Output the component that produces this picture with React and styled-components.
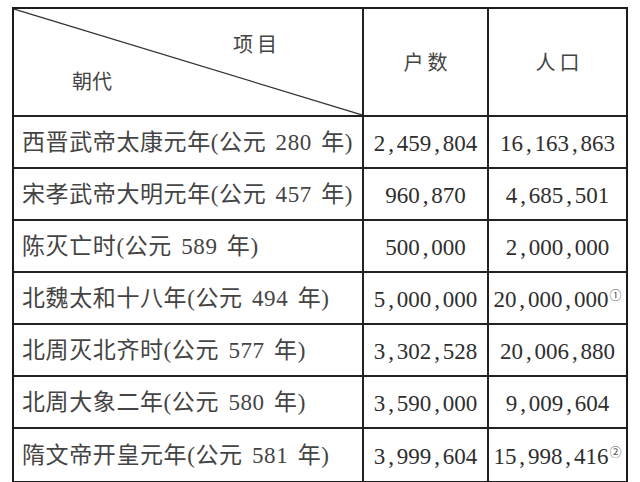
import React from 'react'
import styled, { createGlobalStyle } from 'styled-components'

const GlobalStyle = createGlobalStyle`
  html, body {
    margin: 0;
    padding: 0;
    background: #fff;
  }
  body {
    font-family: "Liberation Serif", "Noto Sans CJK SC", serif;
    color: #2a2a2a;
  }
`

const Page = styled.div`
  width: 640px;
  height: 482px;
  box-sizing: border-box;
  padding: 7px 0 0 12px;
  overflow: hidden;
`

const Table = styled.div`
  display: grid;
  grid-template-columns: 350px 125px 137px;
  grid-template-rows: 108px repeat(6, 52px) 52px;
  width: 616px;
  box-sizing: border-box;
  border: 2px solid #1c1c1c;
`

const Cell = styled.div`
  box-sizing: border-box;
  border-right: ${(p) => (p.$lastCol ? 'none' : '2px solid #222')};
  border-bottom: ${(p) => (p.$lastRow ? 'none' : '2px solid #222')};
  display: flex;
  align-items: center;
  justify-content: ${(p) => (p.$center ? 'center' : 'flex-start')};
  padding-left: ${(p) => (p.$center ? '0' : '8px')};
  font-size: 23px;
  line-height: 1;
  white-space: nowrap;
`

const Name = styled.span`
  font-family: "Liberation Serif", "Noto Sans CJK SC", serif;
  color: #444;
  letter-spacing: 0.6px;
  word-spacing: 3px;
`

const Num = styled.span`
  font-family: "Liberation Serif", serif;
  font-size: 23px;
  color: #2e2e2e;
  position: relative;
  top: 1px;
`

const Comma = styled.span`
  display: inline-block;
  width: 11.5px;
  text-align: center;
`

const Note = styled.sup`
  font-family: "Noto Sans CJK SC", sans-serif;
  font-size: 12px;
  color: #555;
  line-height: 1;
  vertical-align: top;
  position: relative;
  top: -3px;
  margin-left: 1px;
`

const CornerCell = styled(Cell)`
  position: relative;
  flex-direction: column;
  align-items: stretch;
  justify-content: space-between;
  padding: 24px 0 23px 0;
`

const Diagonal = styled.svg`
  position: absolute;
  left: 0;
  top: 0;
  width: 100%;
  height: 100%;
  pointer-events: none;
`

const HeadLabel = styled.span`
  font-family: "Noto Sans CJK SC", sans-serif;
  font-size: 20px;
  color: #444;
  line-height: 22px;
  letter-spacing: ${(p) => p.$spacing || '0'};
  align-self: ${(p) => (p.$right ? 'flex-end' : 'flex-start')};
  margin: ${(p) => (p.$right ? '0 81px 0 0' : '0 0 0 58px')};
`

const HeadTitle = styled.span`
  font-family: "Noto Sans CJK SC", sans-serif;
  font-size: 20px;
  color: #444;
  letter-spacing: 4px;
  margin-right: -4px;
`

const rows = [
  ['西晋武帝太康元年(公元 280 年)', '2,459,804', '16,163,863'],
  ['宋孝武帝大明元年(公元 457 年)', '960,870', '4,685,501'],
  ['陈灭亡时(公元 589 年)', '500,000', '2,000,000'],
  ['北魏太和十八年(公元 494 年)', '5,000,000', '20,000,000', '①'],
  ['北周灭北齐时(公元 577 年)', '3,302,528', '20,006,880'],
  ['北周大象二年(公元 580 年)', '3,590,000', '9,009,604'],
  ['隋文帝开皇元年(公元 581 年)', '3,999,604', '15,998,416', '②'],
]

const Figure = ({ value }) => {
  const parts = value.split(',')
  return (
    <Num>
      {parts.map((p, i) => (
        <React.Fragment key={i}>
          {i > 0 && <Comma>,</Comma>}
          {p}
        </React.Fragment>
      ))}
    </Num>
  )
}

export default function App() {
  return (
    <Page>
      <GlobalStyle />
      <Table>
        <CornerCell>
          <Diagonal viewBox="0 0 348 106" preserveAspectRatio="none">
            <line x1="0" y1="0" x2="348" y2="106" stroke="#333" strokeWidth="1.2" />
          </Diagonal>
          <HeadLabel $right $spacing="4px">项目</HeadLabel>
          <HeadLabel>朝代</HeadLabel>
        </CornerCell>
        <Cell $center>
          <HeadTitle>户数</HeadTitle>
        </Cell>
        <Cell $center $lastCol>
          <HeadTitle>人口</HeadTitle>
        </Cell>
        {rows.map(([name, hu, ren, note], i) => {
          const last = i === rows.length - 1
          return (
            <React.Fragment key={name}>
              <Cell $lastRow={last}>
                <Name>{name}</Name>
              </Cell>
              <Cell $center $lastRow={last}>
                <Figure value={hu} />
              </Cell>
              <Cell $center $lastCol $lastRow={last}>
                <Figure value={ren} />
                {note && <Note>{note}</Note>}
              </Cell>
            </React.Fragment>
          )
        })}
      </Table>
    </Page>
  )
}
